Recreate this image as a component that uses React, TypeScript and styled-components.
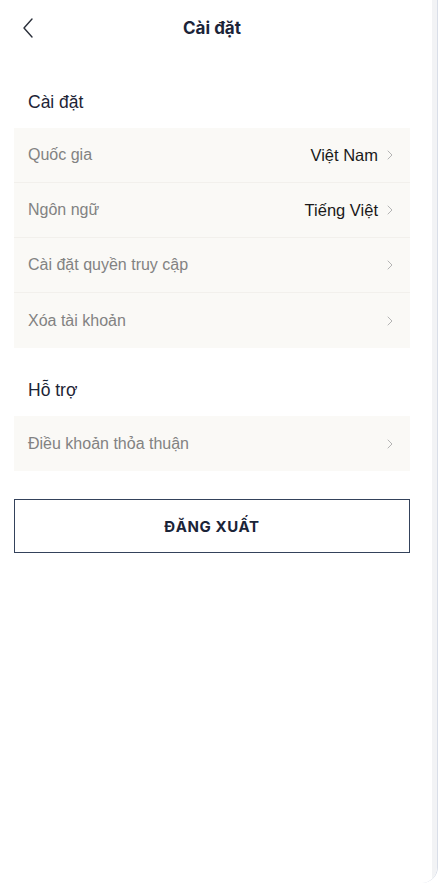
import React from "react";
import styled, { createGlobalStyle } from "styled-components";

const GlobalStyle = createGlobalStyle`
  html, body {
    margin: 0;
    padding: 0;
    background: #ffffff;
  }
  body {
    font-family: "Liberation Sans", Arial, sans-serif;
    -webkit-font-smoothing: antialiased;
  }
`;

type Row = {
  label: string;
  value?: string;
};

type Section = {
  title: string;
  rows: Row[];
};

const sections: Section[] = [
  {
    title: "Cài đặt",
    rows: [
      { label: "Quốc gia", value: "Việt Nam" },
      { label: "Ngôn ngữ", value: "Tiếng Việt" },
      { label: "Cài đặt quyền truy cập" },
      { label: "Xóa tài khoản" },
    ],
  },
  {
    title: "Hỗ trợ",
    rows: [{ label: "Điều khoản thỏa thuận" }],
  },
];

const Frame = styled.div`
  display: flex;
  width: 437px;
  height: 883px;
  border-right: 1px solid #d9dee8;
  border-bottom-right-radius: 16px;
  overflow: hidden;
  background: #ffffff;
`;

const Main = styled.div`
  width: 432px;
  display: flex;
  flex-direction: column;
`;

const Track = styled.div`
  width: 5px;
  background: #f2f3f5;
`;

const Content = styled.div`
  width: 396px;
  padding: 0 22px 0 14px;
  display: flex;
  flex-direction: column;
`;

const Header = styled.div`
  height: 56px;
  display: flex;
  align-items: center;
  justify-content: center;
  position: relative;
  margin-bottom: 4px;
`;

const BackButton = styled.button`
  position: absolute;
  left: 8px;
  top: 17px;
  width: 14px;
  height: 22px;
  padding: 0;
  border: none;
  background: none;
  cursor: pointer;
  display: flex;
`;

const Title = styled.h1`
  margin: 0;
  font-family: Inter, "Liberation Sans", sans-serif;
  font-size: 17px;
  font-weight: 700;
  color: #1b2438;
`;

const SectionTitle = styled.h2`
  margin: 0;
  padding: 30px 0 14px 14px;
  font-size: 17.5px;
  line-height: 24px;
  font-weight: 400;
  color: #1d2435;
`;

const Card = styled.div`
  background: #faf9f6;
  display: flex;
  flex-direction: column;
`;

const RowItem = styled.div<{ $last: boolean }>`
  height: 55px;
  box-sizing: border-box;
  display: flex;
  align-items: center;
  padding: 0 17px 0 14px;
  border-bottom: ${(p) => (p.$last ? "none" : "1px solid #f2f0ec")};
  cursor: pointer;
`;

const Label = styled.span`
  flex: 1;
  font-size: 16px;
  color: #828282;
`;

const Value = styled.span`
  font-size: 16.5px;
  color: #1a1a1a;
  margin-right: 9px;
`;

const Logout = styled.button`
  margin-top: 28px;
  height: 54px;
  border: 1.5px solid #34425b;
  background: #ffffff;
  font-family: Inter, "Liberation Sans", sans-serif;
  font-size: 15px;
  font-weight: 700;
  letter-spacing: 0.6px;
  color: #1b2438;
  cursor: pointer;
`;

const Chevron = () => (
  <svg width="6" height="10" viewBox="0 0 6 10" fill="none">
    <polyline
      points="1,1 5,5 1,9"
      stroke="#b4b4b4"
      strokeWidth="1"
      strokeLinecap="round"
      strokeLinejoin="round"
    />
  </svg>
);

const BackIcon = () => (
  <svg width="12" height="22" viewBox="0 0 12 22" fill="none">
    <polyline
      points="10,2 2,11 10,20"
      stroke="#2a2f3a"
      strokeWidth="1.4"
      strokeLinecap="round"
      strokeLinejoin="round"
    />
  </svg>
);

const App = () => {
  return (
    <>
      <GlobalStyle />
      <Frame>
        <Main>
          <Content>
            <Header>
              <BackButton aria-label="Quay lại">
                <BackIcon />
              </BackButton>
              <Title>Cài đặt</Title>
            </Header>
            {sections.map((section) => (
              <React.Fragment key={section.title}>
                <SectionTitle>{section.title}</SectionTitle>
                <Card>
                  {section.rows.map((row, i) => (
                    <RowItem key={row.label} $last={i === section.rows.length - 1}>
                      <Label>{row.label}</Label>
                      {row.value && <Value>{row.value}</Value>}
                      <Chevron />
                    </RowItem>
                  ))}
                </Card>
              </React.Fragment>
            ))}
            <Logout>ĐĂNG XUẤT</Logout>
          </Content>
        </Main>
        <Track />
      </Frame>
    </>
  );
};

export default App;
